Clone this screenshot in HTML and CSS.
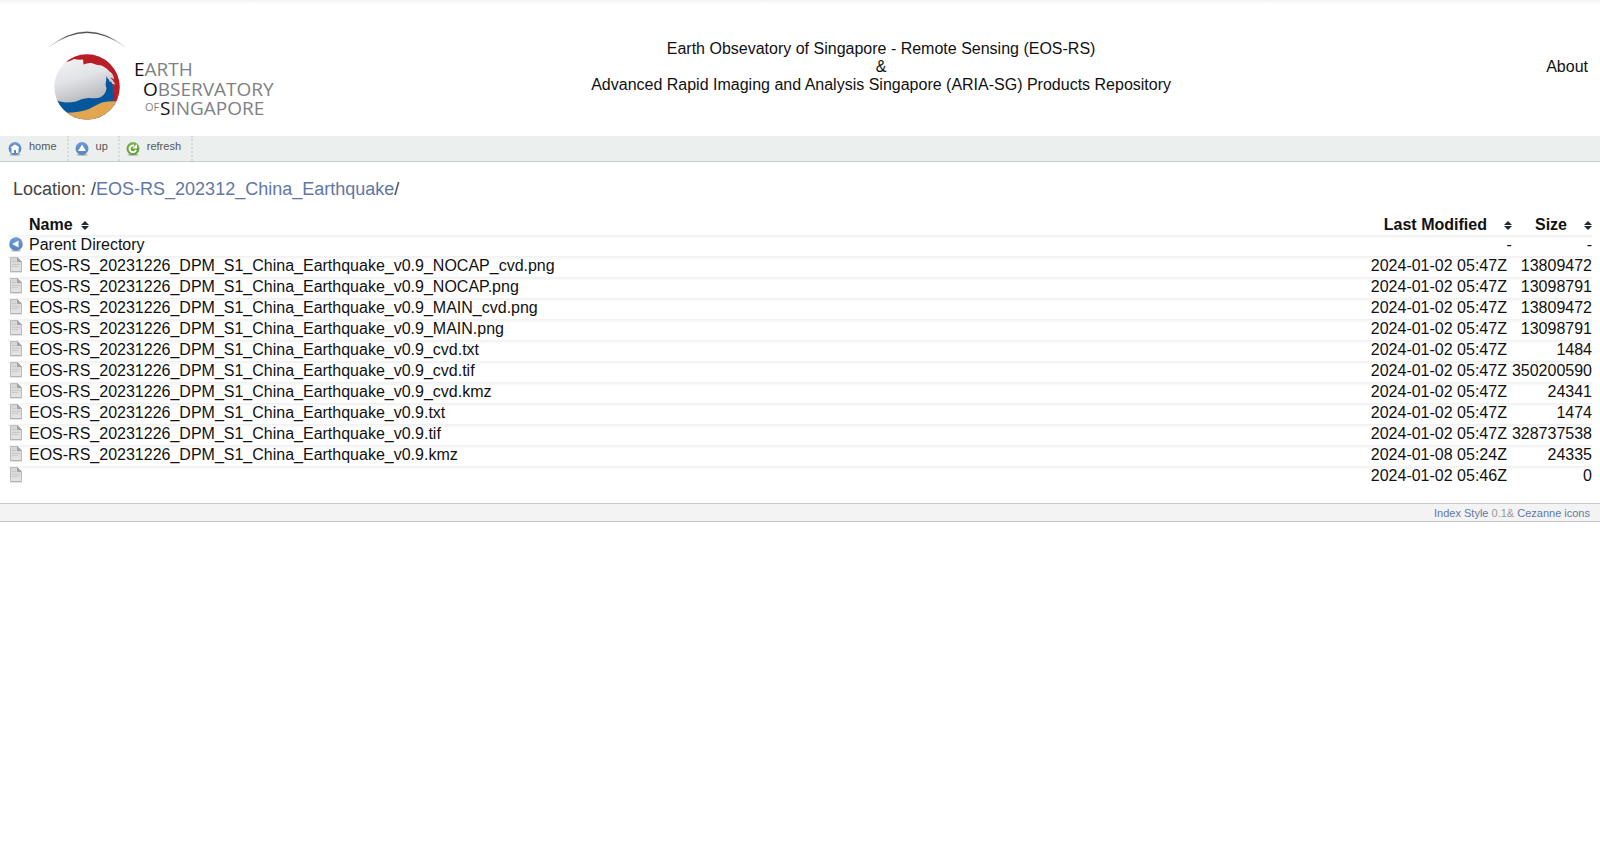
FILE: index.html
```
<!DOCTYPE html>
<html lang="en">
<head>
<meta charset="utf-8">
<title>Index of /EOS-RS_202312_China_Earthquake/</title>
<link rel="stylesheet" href="styles.css">
</head>
<body>
<svg class="defs" aria-hidden="true">
  <defs>
    <linearGradient id="page-fill" x1="0" y1="0" x2="0" y2="1"><stop offset="0" stop-color="#d4d4d4"/><stop offset="1" stop-color="#e4e4e4"/></linearGradient>
    <linearGradient id="blue-fill" x1="0" y1="0" x2="0" y2="1"><stop offset="0" stop-color="#6d9ad0"/><stop offset="1" stop-color="#5583c2"/></linearGradient>
    <linearGradient id="green-fill" x1="0" y1="0" x2="0" y2="1"><stop offset="0" stop-color="#7cb552"/><stop offset="1" stop-color="#569a26"/></linearGradient>
    <symbol id="file" viewBox="0 0 14 17">
      <path d="M1.500 1.500h7l4 4v10h-11z" fill="url(#page-fill)" stroke="#bcbcbc"/>
      <path d="M8 1l5 5H8z" fill="#a4a4a4"/>
      <path d="M3 5.500h4M3 8.500h8M3 10.500h6" stroke="#cacaca"/>
      <path d="M1 16h12" stroke="#999" stroke-opacity=".5"/>
    </symbol>
    <symbol id="sort" viewBox="0 0 8 9">
      <path d="M4 0l4 4H0zM0 5h8L4 9z" fill="#202a33"/>
    </symbol>
    <symbol id="back" viewBox="0 0 14 15">
      <ellipse cx="7" cy="13.500" rx="5" ry="1.200" fill="#8a8a8a" opacity=".5"/>
      <circle cx="7" cy="7" r="6.800" fill="url(#blue-fill)"/>
      <path d="M9.500 3.500v7L3.200 7z" fill="#fff"/>
    </symbol>
  </defs>
</svg>

<header class="masthead">
  <svg class="logo" viewBox="0 0 240 100" role="img" aria-label="Earth Observatory of Singapore">
    <defs>
      <linearGradient id="globe" x1="0.3" y1="0" x2="0.6" y2="1"><stop offset="0" stop-color="#f4f4f6"/><stop offset=".35" stop-color="#e2e3e6"/><stop offset=".75" stop-color="#b2b3b8"/></linearGradient>
      <linearGradient id="arc" x1="0" y1="0" x2="1" y2="0"><stop offset="0" stop-color="#555" stop-opacity=".2"/><stop offset=".3" stop-color="#444"/><stop offset=".7" stop-color="#444"/><stop offset="1" stop-color="#555" stop-opacity=".2"/></linearGradient>
      <clipPath id="disc"><circle cx="43" cy="63" r="32.700"/></clipPath>
    </defs>
    <path d="M5 23Q43-7.500 81 23Q43-5.500 5 23z" fill="url(#arc)" stroke="url(#arc)" stroke-width=".4"/>
    <g clip-path="url(#disc)">
      <path d="M10 30h66v66H10z" fill="url(#globe)"/>
      <path d="M22 38q5-1 8-3q4 1 9 .5l.5 5q4-2 8-1.500q5 2 10 2.500q6 3 8 6q4 2 4.500 8q-2-2-4-2q3 2 5.500 7q-2 0-4-1q3 9 2 18l-3 4h12V26H22z" fill="#b91d25"/>
      <path d="M8 75q7 3 14 3.500q6 0 10-1q7-4 14-3.500q7 1 11-1q5-3 5.500-9q-1.500-3-.5-6l.5-6 1.500 3 1 .5.5 2 2 .5 1 3.500q2 6 1.500 15q6 9-2 19H8z" fill="#04569d"/>
      <path d="M8 88q10 1 20 .5q10-1 17-3.500q7-4 13-6.500q8-2 20-1v24H8z" fill="#e2a651"/>
    </g>
    <g class="logo-text">
      <text x="90" y="52"><tspan class="logo-initial">E</tspan>ARTH</text>
      <text x="99" y="72"><tspan class="logo-initial">O</tspan>BSERVATORY</text>
      <text class="logo-of" x="101" y="87">OF</text>
      <text x="116" y="91"><tspan class="logo-initial">S</tspan>INGAPORE</text>
    </g>
  </svg>
  <p class="masthead-title">Earth Obsevatory of Singapore - Remote Sensing (EOS-RS)<br>&amp;<br>Advanced Rapid Imaging and Analysis Singapore (ARIA-SG) Products Repository</p>
  <a class="about" href="#">About</a>
</header>

<nav class="toolbar">
  <a class="tool" href="#">
    <svg class="tool-icon" viewBox="0 0 14 14" aria-hidden="true"><ellipse cx="7" cy="12.800" rx="5.500" ry="1" fill="#777" opacity=".5"/><circle cx="7" cy="6.500" r="6.500" fill="url(#blue-fill)"/><path d="M3 5l4-2.500L11 5v1h-.5v5H8V8H6v3H3.500V6H3z" fill="#fff"/></svg>
    home</a>
  <a class="tool" href="#">
    <svg class="tool-icon" viewBox="0 0 14 14" aria-hidden="true"><ellipse cx="7" cy="12.800" rx="5.500" ry="1" fill="#777" opacity=".5"/><circle cx="7" cy="6.500" r="6.500" fill="url(#blue-fill)"/><path d="M7 2.500l4 6.500H3z" fill="#fff"/></svg>
    up</a>
  <a class="tool" href="#">
    <svg class="tool-icon" viewBox="0 0 14 14" aria-hidden="true"><ellipse cx="7" cy="12.800" rx="5.500" ry="1" fill="#777" opacity=".5"/><circle cx="7" cy="6.500" r="6.500" fill="url(#green-fill)"/><path d="M10 8A3.300 3.300 0 1 1 8 3.800" fill="none" stroke="#fff" stroke-width="2"/><path d="M11 2v4.500H6.500z" fill="#fff"/></svg>
    refresh</a>
</nav>

<h1 class="location">Location: /<a href="#">EOS-RS_202312_China_Earthquake</a>/</h1>

<table class="listing">
  <thead>
    <tr><th class="icon"></th><th class="name">Name<svg class="sort"><use href="#sort"/></svg></th><th class="date">Last Modified<svg class="sort"><use href="#sort"/></svg></th><th class="size">Size<svg class="sort"><use href="#sort"/></svg></th></tr>
  </thead>
  <tbody>
    <tr><td class="icon"><svg class="back-icon"><use href="#back"/></svg></td><td><a href="#">Parent Directory</a></td><td class="date none">-</td><td class="size">-</td></tr>
    <tr><td class="icon"><svg class="file-icon"><use href="#file"/></svg></td><td><a href="#">EOS-RS_20231226_DPM_S1_China_Earthquake_v0.9_NOCAP_cvd.png</a></td><td class="date">2024-01-02 05:47Z</td><td class="size">13809472</td></tr>
    <tr><td class="icon"><svg class="file-icon"><use href="#file"/></svg></td><td><a href="#">EOS-RS_20231226_DPM_S1_China_Earthquake_v0.9_NOCAP.png</a></td><td class="date">2024-01-02 05:47Z</td><td class="size">13098791</td></tr>
    <tr><td class="icon"><svg class="file-icon"><use href="#file"/></svg></td><td><a href="#">EOS-RS_20231226_DPM_S1_China_Earthquake_v0.9_MAIN_cvd.png</a></td><td class="date">2024-01-02 05:47Z</td><td class="size">13809472</td></tr>
    <tr><td class="icon"><svg class="file-icon"><use href="#file"/></svg></td><td><a href="#">EOS-RS_20231226_DPM_S1_China_Earthquake_v0.9_MAIN.png</a></td><td class="date">2024-01-02 05:47Z</td><td class="size">13098791</td></tr>
    <tr><td class="icon"><svg class="file-icon"><use href="#file"/></svg></td><td><a href="#">EOS-RS_20231226_DPM_S1_China_Earthquake_v0.9_cvd.txt</a></td><td class="date">2024-01-02 05:47Z</td><td class="size">1484</td></tr>
    <tr><td class="icon"><svg class="file-icon"><use href="#file"/></svg></td><td><a href="#">EOS-RS_20231226_DPM_S1_China_Earthquake_v0.9_cvd.tif</a></td><td class="date">2024-01-02 05:47Z</td><td class="size">350200590</td></tr>
    <tr><td class="icon"><svg class="file-icon"><use href="#file"/></svg></td><td><a href="#">EOS-RS_20231226_DPM_S1_China_Earthquake_v0.9_cvd.kmz</a></td><td class="date">2024-01-02 05:47Z</td><td class="size">24341</td></tr>
    <tr><td class="icon"><svg class="file-icon"><use href="#file"/></svg></td><td><a href="#">EOS-RS_20231226_DPM_S1_China_Earthquake_v0.9.txt</a></td><td class="date">2024-01-02 05:47Z</td><td class="size">1474</td></tr>
    <tr><td class="icon"><svg class="file-icon"><use href="#file"/></svg></td><td><a href="#">EOS-RS_20231226_DPM_S1_China_Earthquake_v0.9.tif</a></td><td class="date">2024-01-02 05:47Z</td><td class="size">328737538</td></tr>
    <tr><td class="icon"><svg class="file-icon"><use href="#file"/></svg></td><td><a href="#">EOS-RS_20231226_DPM_S1_China_Earthquake_v0.9.kmz</a></td><td class="date">2024-01-08 05:24Z</td><td class="size">24335</td></tr>
    <tr><td class="icon"><svg class="file-icon"><use href="#file"/></svg></td><td></td><td class="date">2024-01-02 05:46Z</td><td class="size">0</td></tr>
  </tbody>
</table>

<footer class="footer"><a href="#">Index Style</a> 0.1&amp; <a href="#">Cezanne icons</a></footer>
</body>
</html>
```
FILE: styles.css
```
* {
  box-sizing: border-box;
}

body {
  margin: 0;
  background: linear-gradient(#f2f2f2, #fff) top / 100% 4px no-repeat #fff;
  color: #111;
  font: 16px/18px "Liberation Sans", Arial, sans-serif;
}

a {
  color: inherit;
  text-decoration: none;
}

svg {
  display: block;
}

.defs {
  position: absolute;
  width: 0;
  height: 0;
}

.masthead {
  display: flex;
  align-items: center;
  min-height: 136px;
  padding: 0 12px 0 44px;
}

.logo {
  width: 240px;
  height: 100px;
  margin-top: 12px;
}

.logo-text {
  fill: #808184;
  font-family: "Open Sans", sans-serif;
  font-size: 19px;
}

.logo-initial {
  fill: #111;
}

.logo-text .logo-of {
  font-size: 11px;
}

.masthead-title {
  flex: 1;
  margin: 0 0 2px;
  padding-right: 68px;
  text-align: center;
}

.about {
  margin-bottom: 2px;
}

.toolbar {
  display: flex;
  height: 26px;
  padding-left: 8px;
  border-bottom: 1px solid #c5cccb;
  background: #ebf0ef;
  color: #555;
  font-size: 11px;
  line-height: 20px;
}

.tool {
  display: flex;
  gap: 7px;
  margin-right: 6px;
  padding-right: 10px;
  border-right: 2px dotted #cfdfd8;
}

.tool-icon {
  width: 14px;
  height: 14px;
  margin-top: 6px;
}

.location {
  margin: 16px 13px 14px;
  color: #444;
  font-size: 18px;
  font-weight: 400;
  line-height: 22px;
}

.location a {
  color: #6277a5;
}

.listing {
  width: calc(100% - 16px);
  margin: 0 8px;
  border-collapse: collapse;
}

.listing th,
.listing td {
  height: 21px;
  padding: 0;
  line-height: 19px;
  text-align: left;
  vertical-align: top;
  white-space: nowrap;
}

.listing th {
  vertical-align: middle;
}

.listing tbody tr {
  background: linear-gradient(#f0f0f0, #fff) top / 100% 4px no-repeat;
}

.listing .icon {
  width: 21px;
}

.listing .date {
  width: 150px;
  padding-right: 5px;
  text-align: right;
}

.listing .size {
  width: 80px;
  text-align: right;
}

.listing th.date,
.listing .none {
  padding-right: 0;
}

.sort {
  display: inline-block;
  width: 8px;
  height: 9px;
  margin-left: 17px;
}

.name .sort {
  margin-left: 8px;
}

.file-icon {
  width: 14px;
  height: 17px;
  margin-left: 1px;
}

.back-icon {
  width: 14px;
  height: 15px;
  margin: 2px 0 0 1px;
}

.footer {
  height: 19px;
  margin-top: 16px;
  padding-right: 10px;
  border: solid #c8c8c8;
  border-width: 1px 0;
  background: #f3f3f3;
  color: #999;
  font-size: 11px;
  line-height: 19px;
  text-align: right;
}

.footer a {
  color: #6277a5;
}
```
